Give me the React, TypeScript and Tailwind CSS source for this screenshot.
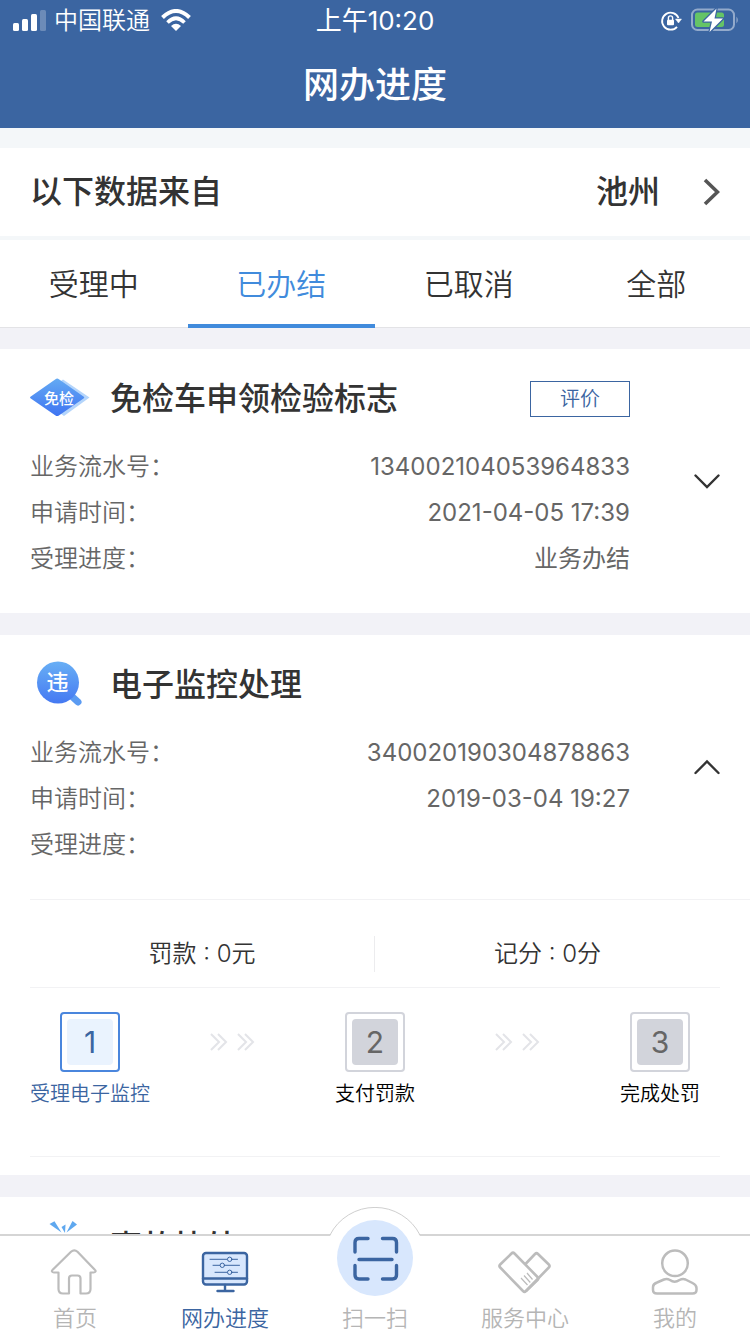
import React, { useState } from "react";

type Step = { label: string; active?: boolean };

type Business = {
  id: string;
  title: string;
  icon: React.ReactNode;
  rows: { label: string; value?: string }[];
  canRate?: boolean;
  steps?: Step[];
};

function ExemptIcon() {
  return (
    <svg width="60" height="48" viewBox="0 0 60 48" className="shrink-0" aria-hidden="true">
      <defs>
        <linearGradient id="exempt" x1="0" y1="0" x2="0" y2="1">
          <stop offset="0" stopColor="#64aaf3" />
          <stop offset="1" stopColor="#3f74f2" />
        </linearGradient>
      </defs>
      <path d="M33 4.500 59.500 22.500 34 41 8 22.500Z" fill="#b4d5fb" />
      <path d="M25.500 4.200a3 3 0 0 1 3.400 0L53.500 21.500a1.200 1.200 0 0 1 0 2L28.900 40.500a3 3 0 0 1-3.400 0L.8 23.500a1.200 1.200 0 0 1 0-2Z" fill="url(#exempt)" />
      <text x="29" y="29" textAnchor="middle" fontSize="15" fontWeight="500" fill="#fff">免检</text>
    </svg>
  );
}

function ViolationIcon() {
  return (
    <svg width="60" height="48" viewBox="0 0 60 48" className="shrink-0" aria-hidden="true">
      <defs>
        <linearGradient id="violation" x1="0" y1="0" x2="0" y2="1">
          <stop offset="0" stopColor="#68aff5" />
          <stop offset="1" stopColor="#4579f2" />
        </linearGradient>
      </defs>
      <path d="m42 35.500 6 5.500" stroke="#5b9bf2" strokeWidth="7" strokeLinecap="round" />
      <circle cx="28" cy="21.500" r="21" fill="url(#violation)" />
      <text x="27.500" y="29" textAnchor="middle" fontSize="22" fontWeight="500" fill="#fff">违</text>
    </svg>
  );
}

function AccidentIcon() {
  return (
    <svg width="60" height="48" viewBox="0 0 60 48" className="shrink-0 overflow-visible" aria-hidden="true">
      <g fill="#5fa8ef">
        <path d="m19.500 1 5-2.800L31.500 9.500Z" />
        <path d="m31.500 4 4-2.500-.5 8.500Z" />
        <path d="M36.500 9.500 42.500-2 47 1.500Z" />
        <path d="M22 14q11-6 22 0l5 8v16H17V22Z" />
      </g>
    </svg>
  );
}

const BUSINESSES: Business[] = [
  {
    id: "exempt",
    title: "免检车申领检验标志",
    icon: <ExemptIcon />,
    canRate: true,
    rows: [
      { label: "业务流水号：", value: "134002104053964833" },
      { label: "申请时间：", value: "2021-04-05 17:39" },
      { label: "受理进度：", value: "业务办结" },
    ],
  },
  {
    id: "violation",
    title: "电子监控处理",
    icon: <ViolationIcon />,
    rows: [
      { label: "业务流水号：", value: "340020190304878863" },
      { label: "申请时间：", value: "2019-03-04 19:27" },
      { label: "受理进度：" },
    ],
    steps: [{ label: "受理电子监控", active: true }, { label: "支付罚款" }, { label: "完成处罚" }],
  },
  { id: "accident", title: "事故快处", icon: <AccidentIcon />, rows: [] },
];

const TABS = ["受理中", "已办结", "已取消", "全部"];

function StatusBar() {
  return (
    <div className="grid h-[42px] grid-cols-3 items-center px-3 text-2xl">
      <div className="flex items-center gap-2 whitespace-nowrap">
        <svg width="34" height="24" viewBox="0 0 34 24" fill="#fff" aria-hidden="true">
          <rect x="1" y="14" width="6" height="8" rx="1.500" />
          <rect x="10" y="10" width="6" height="12" rx="1.500" />
          <rect x="19" y="5" width="6" height="17" rx="1.500" />
          <rect x="28" y="1" width="6" height="21" rx="1.500" opacity=".25" />
        </svg>
        <span>中国联通</span>
        <svg width="34" height="24" viewBox="-3 1 34 24" fill="none" aria-hidden="true">
          <path d="M1.500 9.500Q15-3.500 28.500 9.500" stroke="#fff" strokeWidth="4" />
          <path d="M6.500 14.500Q15 6 23.500 14.500" stroke="#fff" strokeWidth="3.600" />
          <path d="M10 18Q15 13.500 20 18L15 23Z" fill="#fff" />
        </svg>
      </div>
      <div className="text-center text-[26px] font-normal">上午10:20</div>
      <div className="flex items-center justify-end gap-2">
        <svg width="22" height="22" viewBox="0 0 22 22" fill="none" stroke="#fff" strokeWidth="1.800" aria-hidden="true">
          <path d="M17 16.800A8.500 8.500 0 1 1 18.500 8" />
          <path d="m15.500 9 6 0-3 4Z" fill="#fff" strokeWidth="0.500" />
          <rect x="7" y="9.800" width="7" height="5.500" rx="1" fill="#fff" stroke="none" />
          <path d="M8.400 10V8a2.100 2.100 0 0 1 4.200 0v2" strokeWidth="1.400" />
        </svg>
        <svg width="48" height="26" viewBox="0 1 48 26" aria-hidden="true">
          <rect x="2" y="2.500" width="42" height="20.500" rx="5.500" fill="none" stroke="#fff" strokeOpacity=".45" strokeWidth="2" />
          <path d="M46.500 9.500q2.500 3.500 0 7Z" fill="#fff" opacity=".5" />
          <rect x="5" y="5.500" width="29" height="14.500" rx="2.500" fill="#65c466" />
          <path d="M26.500 1.500 13.500 14.500h8.500L19.500 25 33 11.500h-8.500Z" fill="#fff" stroke="#3b65a1" strokeWidth="2.500" strokeLinejoin="round" paintOrder="stroke" />
        </svg>
      </div>
    </div>
  );
}

function DoubleArrows() {
  return (
    <svg width="46" height="60" viewBox="0 0 46 60" fill="none" stroke="#e3e4e8" strokeWidth="2" aria-hidden="true">
      <path d="m1 22 8 8-8 8M8 22l8 8-8 8M28 22l8 8-8 8M35 22l8 8-8 8" />
    </svg>
  );
}

function Steps({ steps }: { steps: Step[] }) {
  return (
    <ol className="flex justify-between">
      {steps.map((step, i) => (
        <React.Fragment key={step.label}>
          {i > 0 && (
            <li aria-hidden="true">
              <DoubleArrows />
            </li>
          )}
          <li className="flex w-[120px] flex-col items-center gap-2">
            <div
              className={`flex size-[60px] rounded-sm border-2 p-[5px] font-normal ${
                step.active ? "border-[#4a86dd] text-[#3b65a1]" : "border-[#d2d4db] text-[#666]"
              }`}
            >
              <span
                className={`flex flex-1 items-center justify-center rounded-sm text-3xl ${
                  step.active ? "bg-[#eaf3fe]" : "bg-[#d2d4db]"
                }`}
              >
                {i + 1}
              </span>
            </div>
            <span className={`text-xl whitespace-nowrap ${step.active ? "text-[#3b65a1]" : "text-black"}`}>
              {step.label}
            </span>
          </li>
        </React.Fragment>
      ))}
    </ol>
  );
}

function BusinessCard({ item }: { item: Business }) {
  const [open, setOpen] = useState(Boolean(item.steps));

  return (
    <section className="shrink-0 bg-white">
      <div className="flex items-center gap-16 px-[30px] pb-[31px]">
        <div className="min-w-0 flex-1">
          <div className="flex h-[95px] items-center gap-5 pt-1">
            {item.icon}
            <h2 className="flex-1 text-[32px] leading-12 font-medium text-[#333]">{item.title}</h2>
            {item.canRate && (
              <button className="h-9 w-[100px] border border-[#3b65a1] text-xl leading-8 text-[#3b65a1]">评价</button>
            )}
          </div>
          <dl className="text-2xl leading-[46px] text-[#666]">
            {item.rows.map((row) => (
              <div key={row.label} className="flex justify-between">
                <dt>{row.label}</dt>
                <dd className="font-normal">{row.value}</dd>
              </div>
            ))}
          </dl>
        </div>
        {item.rows.length > 0 && (
          <button onClick={() => setOpen(!open)} aria-expanded={open} aria-label={item.title} className="pt-[30px]">
            <svg width="26" height="26" viewBox="0 0 26 26" fill="none" stroke="#333" strokeWidth="2.400" strokeLinecap="round">
              <path d={open ? "M1.500 19 13 7.500 24.500 19" : "M1.500 7.500 13 19 24.500 7.500"} />
            </svg>
          </button>
        )}
      </div>

      {item.steps && open && (
        <div className="pb-[18px] pl-[30px]">
          <div className="border-t border-[#f2f2f4] pr-[30px]">
            <div className="border-b border-[#f2f2f4] pt-9 pb-[15px]">
              <div className="grid grid-cols-2 divide-x divide-[#ececee] text-center text-2xl leading-9 text-[#333]">
                <p>罚款 : 0元</p>
                <p>记分 : 0分</p>
              </div>
            </div>
            <div className="border-b border-[#f2f2f4] pt-6 pb-12">
              <Steps steps={item.steps} />
            </div>
          </div>
        </div>
      )}
    </section>
  );
}

function HomeIcon() {
  return (
    <svg width="60" height="56" viewBox="0 0 60 56" fill="none" stroke="#bcbcbc" strokeWidth="2.200" strokeLinejoin="round" aria-hidden="true">
      <path d="M13.500 26.500H9c-2 0-2.800-1.400-1.300-2.800L26 5.800q3.300-3 6.500 0l17.300 17.900c1.500 1.400.7 2.800-1.300 2.800h-3V43q0 4.500-4.500 4.500h-5.500v-15q0-3-3-3H27q-3 0-3 3v15h-6q-4.500 0-4.500-4.500Z" />
    </svg>
  );
}

function MonitorIcon() {
  return (
    <svg width="60" height="56" viewBox="0 0 60 56" fill="none" stroke="#3b65a1" strokeWidth="2.400" strokeLinecap="round" aria-hidden="true">
      <rect x="8" y="7" width="44" height="31.500" rx="3" fill="#d8e7fd" />
      <path d="M8 32.500h44M30 39v5M22.500 45h16" />
      <g strokeWidth="1">
        <path d="M15 13.300h27.500M18 19.300h26.500M20 26.300h22.500" />
        <g fill="#d8e7fd">
          <circle cx="34.700" cy="13.300" r="2.200" />
          <circle cx="27.300" cy="19.300" r="2.200" />
          <circle cx="34.700" cy="26.300" r="2.200" />
        </g>
      </g>
    </svg>
  );
}

function HandshakeIcon() {
  return (
    <svg width="60" height="56" viewBox="0 0 60 56" fill="none" stroke="#bcbcbc" strokeWidth="2.600" strokeLinejoin="round" aria-hidden="true">
      <path d="M16.500 7.500q1.500-1.500 3 0L42.500 31q1.500 1.500 0 3L31 45q-1.500 1.500-3 0L5.200 21.500q-1.500-1.500 0-3Z" />
      <path d="M30.500 18 40 8q1.500-1.500 3 0l10.800 10.500q1.500 1.500 0 3L31 45" />
      <path d="m26 32 6.500 7M29 29.500l6.300 7M32 27l5.500 6.500" strokeWidth="1.200" />
    </svg>
  );
}

function UserIcon() {
  return (
    <svg width="60" height="56" viewBox="0 0 60 56" fill="none" stroke="#bcbcbc" strokeWidth="2.500" strokeLinejoin="round" aria-hidden="true">
      <circle cx="30" cy="17.300" r="12.800" />
      <path d="M8 44v-3q0-3 4-4.500l7-3q3-1 6 .5 4.500 3.500 9.500 0 3-1.500 6-.5l7 3.500q4 2 4 5v2q0 3.500-4 3.500H12q-4 0-4-3.500Z" />
    </svg>
  );
}

function ScanIcon() {
  return (
    <svg width="102" height="102" viewBox="0 0 102 102" fill="none" aria-hidden="true">
      <path d="M6 29A51 51 0 0 1 96 29V60H6Z" fill="#fff" />
      <path d="M6 28A50.500 50.500 0 0 1 96 28" stroke="#cfcfcf" />
      <circle cx="51" cy="51" r="38" fill="#d8e7fd" />
      <g stroke="#3b65a1" strokeWidth="3.400" strokeLinecap="round">
        <path d="M31 45V35.500q0-4 4-4h9M58.500 31.500h10q4 0 4 4V45M72.500 58.500V68q0 4-4 4h-10M44 72h-9q-4 0-4-4v-9.500M35 52.500h33" />
      </g>
    </svg>
  );
}

const NAV = [
  { label: "首页", icon: <HomeIcon /> },
  { label: "网办进度", icon: <MonitorIcon />, active: true },
  { label: "扫一扫", icon: <ScanIcon />, raised: true },
  { label: "服务中心", icon: <HandshakeIcon /> },
  { label: "我的", icon: <UserIcon /> },
];

function BottomNav() {
  return (
    <nav className="relative grid h-[100px] shrink-0 grid-cols-5 border-t-2 border-[#d5d5d5] bg-white">
      {NAV.map((item) => (
        <a
          key={item.label}
          href="#"
          className={`relative flex flex-col items-center justify-end text-[22px] leading-8 whitespace-nowrap ${
            item.active ? "text-[#3b65a1]" : "text-[#b5b5b5]"
          }`}
        >
          {item.raised ? <span className="absolute -top-[29px]">{item.icon}</span> : item.icon}
          <span className="relative">{item.label}</span>
        </a>
      ))}
    </nav>
  );
}

export default function App() {
  const [tab, setTab] = useState(1);

  return (
    <div className="flex h-screen flex-col overflow-hidden bg-[#f2f2f7] font-['Inter','Noto_Sans_CJK_SC',sans-serif] font-[350]">
      <header className="shrink-0 bg-[#3b65a1] text-white">
        <StatusBar />
        <h1 className="text-center text-4xl leading-[86px] font-medium">网办进度</h1>
      </header>

      <div className="shrink-0 bg-[#f4f7f9] pt-5">
        <button className="flex h-[88px] w-full items-center bg-white px-[30px] text-[32px] font-medium text-[#333]">
          <span className="flex-1 text-left">以下数据来自</span>
          <span>池州</span>
          <svg width="60" height="32" viewBox="0 0 60 32" fill="none" stroke="#555" strokeWidth="3.600" aria-hidden="true">
            <path d="m45 4 12.500 12L45 28" />
          </svg>
        </button>
        <div role="tablist" className="mt-1 grid h-[88px] grid-cols-4 border-b border-[#e3e3e6] bg-white text-3xl">
          {TABS.map((name, i) => (
            <button
              key={name}
              role="tab"
              aria-selected={tab === i}
              onClick={() => setTab(i)}
              className={`-mb-px border-b-4 pt-1 ${
                tab === i ? "border-[#418bdc] text-[#418bdc]" : "border-transparent text-[#333]"
              }`}
            >
              {name}
            </button>
          ))}
        </div>
      </div>

      <main className="flex min-h-0 flex-1 flex-col gap-[22px] overflow-y-auto pt-[21px] [scrollbar-width:none]">
        {BUSINESSES.map((item) => (
          <BusinessCard key={item.id} item={item} />
        ))}
      </main>

      <BottomNav />
    </div>
  );
}
